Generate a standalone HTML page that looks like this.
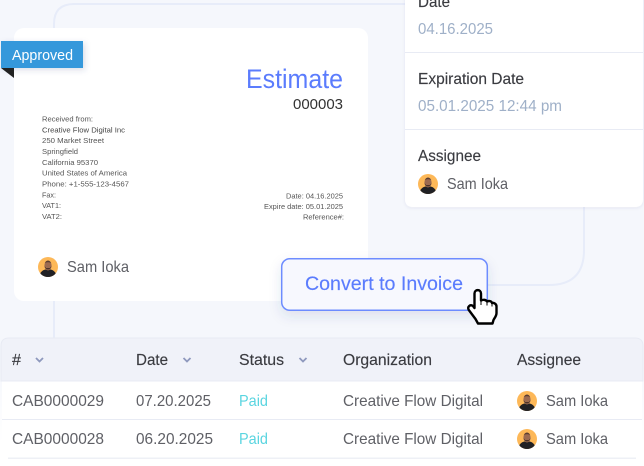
<!DOCTYPE html>
<html><head><meta charset="utf-8"><style>
html,body{margin:0;padding:0;background:#fff}
svg{display:block;width:644px;height:466px;font-family:"Liberation Sans",sans-serif}
.m{stroke:#3a3b40;stroke-width:.15px}
.b{stroke:#5b7cfd;stroke-width:.15px}
</style></head><body>
<svg xmlns="http://www.w3.org/2000/svg" width="644" height="466" viewBox="0 0 644 466">
<defs>
<linearGradient id="fade" x1="0" y1="0" x2="0" y2="1"><stop offset="0" stop-color="#f5f7fc"/><stop offset="0.78" stop-color="#f5f7fc"/><stop offset="0.95" stop-color="#fff"/><stop offset="1" stop-color="#fff"/></linearGradient>
<filter id="s1" x="-20%" y="-40%" width="140%" height="200%"><feDropShadow dx="0" dy="5" stdDeviation="6" flood-color="#3a4a80" flood-opacity="0.12"/></filter>
<filter id="s2" x="-20%" y="-20%" width="140%" height="140%"><feDropShadow dx="0" dy="1" stdDeviation="1.5" flood-color="#3a4a80" flood-opacity="0.08"/></filter>
<filter id="s3" x="-30%" y="-60%" width="160%" height="220%"><feDropShadow dx="2" dy="2" stdDeviation="3" flood-color="#3a4a80" flood-opacity="0.18"/></filter>
<clipPath id="ac"><circle cx="0" cy="0" r="10"/></clipPath>
<g id="av">
<circle r="10" fill="#fdb858"/>
<g clip-path="url(#ac)">
<path d="M-8.5 10 C-8.5 5 -5 3 -2.5 2.5 L2.5 2.5 C5 3 8.5 5 8.5 10 Z" fill="#202024"/>
<ellipse cx="0" cy="-1.5" rx="3.6" ry="5" fill="#9c6a50"/>
<path d="M-3.4 -1 C-3 3.5 3 3.5 3.4 -1 L2 1 L-2 1 Z" fill="#4a3228"/>
<path d="M-3.2 -4 C-2 -7.2 2 -7.2 3.2 -4 C1.5 -5 -1.5 -5 -3.2 -4 Z" fill="#5a3d30"/>
</g>
</g>
</defs>
<rect width="644" height="466" fill="url(#fade)"/>
<path d="M54 338 V24 Q54 4 74 4 H405" fill="none" stroke="#e7ecf9" stroke-width="2"/>
<path d="M584 207 V250 Q584 285 549 285 H487" fill="none" stroke="#e7ecf9" stroke-width="2"/>

<rect x="14" y="28" width="354" height="273" rx="10" fill="#fff"/>
<rect x="1" y="41" width="82" height="27" fill="#3498db" filter="url(#s3)"/>
<path d="M1 68 H14 V78 Z" fill="#222"/>
<text x="12" y="60" font-size="15" fill="#fff" textLength="61" lengthAdjust="spacingAndGlyphs">Approved</text>

<text x="246" y="88" font-size="27" fill="#5b7cfd" textLength="97" lengthAdjust="spacingAndGlyphs">Estimate</text>
<text x="293" y="109" font-size="15" fill="#333" textLength="50" lengthAdjust="spacingAndGlyphs">000003</text>

<g font-size="7.4" fill="#555">
<text x="42" y="121.5" textLength="51" lengthAdjust="spacingAndGlyphs">Received from:</text>
<text x="42" y="132.3" fill="#444" textLength="83" lengthAdjust="spacingAndGlyphs">Creative Flow Digital Inc</text>
<text x="42" y="143.2" textLength="62" lengthAdjust="spacingAndGlyphs">250 Market Street</text>
<text x="42" y="154" textLength="36" lengthAdjust="spacingAndGlyphs">Springfield</text>
<text x="42" y="164.8" textLength="56" lengthAdjust="spacingAndGlyphs">California 95370</text>
<text x="42" y="175.7" textLength="85" lengthAdjust="spacingAndGlyphs">United States of America</text>
<text x="42" y="186.5" textLength="87" lengthAdjust="spacingAndGlyphs">Phone: +1-555-123-4567</text>
<text x="42" y="197.3" textLength="14" lengthAdjust="spacingAndGlyphs">Fax:</text>
<text x="42" y="208.1" textLength="19" lengthAdjust="spacingAndGlyphs">VAT1:</text>
<text x="42" y="219" textLength="20" lengthAdjust="spacingAndGlyphs">VAT2:</text>
<text x="286" y="198.5" textLength="57" lengthAdjust="spacingAndGlyphs">Date: 04.16.2025</text>
<text x="264" y="209" textLength="79" lengthAdjust="spacingAndGlyphs">Expire date: 05.01.2025</text>
<text x="303" y="219.5" textLength="41" lengthAdjust="spacingAndGlyphs">Reference#:</text>
</g>
<use href="#av" x="48" y="267"/>
<text x="67" y="272" font-size="16" fill="#5f6066" textLength="62" lengthAdjust="spacingAndGlyphs">Sam Ioka</text>

<path d="M405 -10 H643 V199 Q643 207 635 207 H413 Q405 207 405 199 Z" fill="#fff" filter="url(#s2)"/>
<rect x="405" y="52" width="238" height="1" fill="#e8ebf4"/>
<rect x="405" y="129" width="238" height="1" fill="#e8ebf4"/>
<g font-size="16">
<text x="418" y="7" fill="#3a3b40" class="m" textLength="32" lengthAdjust="spacingAndGlyphs">Date</text>
<text x="418" y="34" fill="#9fb0c8" textLength="75" lengthAdjust="spacingAndGlyphs">04.16.2025</text>
<text x="418" y="84" fill="#3a3b40" class="m" textLength="106" lengthAdjust="spacingAndGlyphs">Expiration Date</text>
<text x="418" y="111" fill="#9fb0c8" textLength="144" lengthAdjust="spacingAndGlyphs">05.01.2025 12:44 pm</text>
<text x="418" y="161" fill="#3a3b40" class="m" textLength="63" lengthAdjust="spacingAndGlyphs">Assignee</text>
<text x="447" y="189" fill="#5f6066" textLength="61" lengthAdjust="spacingAndGlyphs">Sam Ioka</text>
</g>
<use href="#av" x="428" y="184"/>

<rect x="281.7" y="258.7" width="205.6" height="51.6" rx="8" fill="#f7f8fe" stroke="#6d8cff" stroke-width="1.5" filter="url(#s1)"/>
<text x="305" y="290" font-size="19.5" fill="#5b7cfd" class="b" textLength="158" lengthAdjust="spacingAndGlyphs">Convert to Invoice</text>

<path d="M474.5 293.5 C474.5 289 481 289 481 293.5 L481 300.5 C483 299.5 486 299.5 487 301.5 C489 300.5 491.5 301 492 303 C494 302.5 496.5 304 496.5 306.5 L496.5 313 C496.5 316 494.5 318 493.5 320 L492.5 323.5 L478 323.5 L475.5 319 L468.8 310 C467 307 470 304 473 306 L474.5 308 Z" fill="#fff" stroke="#000" stroke-width="2.4" stroke-linejoin="round"/>
<path d="M481 301 V305 M487 302 V305.5 M492 303.5 V306.5" stroke="#000" stroke-width="1" fill="none"/>

<path d="M1 381 V346 Q1 338 9 338 H635 Q643 338 643 346 V381 Z" fill="#f0f2f9" stroke="#e8ebf4" stroke-width="1"/>
<rect x="2" y="381" width="640" height="77" fill="#fff"/>
<rect x="2" y="380.5" width="640" height="1" fill="#e8ebf4"/>
<rect x="2" y="419" width="640" height="1" fill="#e8ebf4"/>
<rect x="8" y="457.5" width="628" height="1.5" fill="#eef0f6"/>
<g font-size="16" fill="#3a3b40">
<text x="12" y="365" class="m" textLength="9" lengthAdjust="spacingAndGlyphs">#</text>
<text x="136" y="365" class="m" textLength="32" lengthAdjust="spacingAndGlyphs">Date</text>
<text x="239" y="365" class="m" textLength="45" lengthAdjust="spacingAndGlyphs">Status</text>
<text x="343" y="365" class="m" textLength="89" lengthAdjust="spacingAndGlyphs">Organization</text>
<text x="517" y="365" class="m" textLength="64" lengthAdjust="spacingAndGlyphs">Assignee</text>
</g>
<g fill="none" stroke="#8e99bd" stroke-width="1.8">
<path d="M36 358 L39.5 361.5 L43 358"/>
<path d="M183.5 358 L187 361.5 L190.5 358"/>
<path d="M299.5 358 L303 361.5 L306.5 358"/>
</g>
<g font-size="16" fill="#5f6066">
<text x="12" y="406" textLength="92" lengthAdjust="spacingAndGlyphs">CAB0000029</text>
<text x="136" y="406" textLength="75" lengthAdjust="spacingAndGlyphs">07.20.2025</text>
<text x="239" y="406" fill="#5ad5e0" textLength="29" lengthAdjust="spacingAndGlyphs">Paid</text>
<text x="343" y="406" textLength="140" lengthAdjust="spacingAndGlyphs">Creative Flow Digital</text>
<text x="546" y="406" textLength="62" lengthAdjust="spacingAndGlyphs">Sam Ioka</text>
<text x="12" y="444" textLength="92" lengthAdjust="spacingAndGlyphs">CAB0000028</text>
<text x="136" y="444" textLength="77" lengthAdjust="spacingAndGlyphs">06.20.2025</text>
<text x="239" y="444" fill="#5ad5e0" textLength="29" lengthAdjust="spacingAndGlyphs">Paid</text>
<text x="343" y="444" textLength="140" lengthAdjust="spacingAndGlyphs">Creative Flow Digital</text>
<text x="546" y="444" textLength="62" lengthAdjust="spacingAndGlyphs">Sam Ioka</text>
</g>
<use href="#av" x="527" y="401"/>
<use href="#av" x="527" y="439"/>
</svg>
</body></html>
